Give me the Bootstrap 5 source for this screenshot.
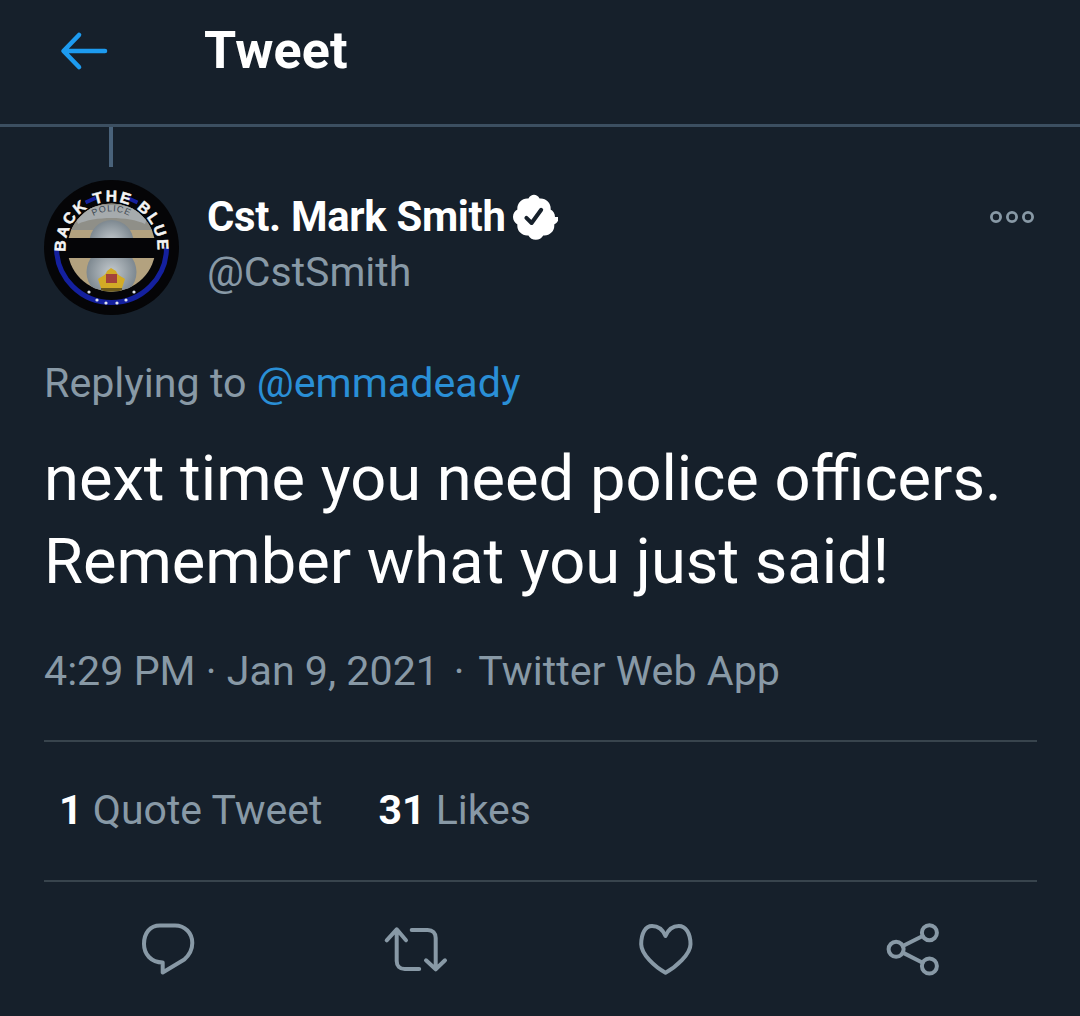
<!DOCTYPE html>
<html lang="en"><head><meta charset="utf-8"><title>Tweet</title>
<link href="https://cdn.jsdelivr.net/npm/bootstrap@5.3.0/dist/css/bootstrap.min.css" rel="stylesheet">
<style>
html,body{background:#16202b;height:1016px;overflow:hidden}
body{font-family:Roboto,"Liberation Sans",sans-serif;color:#fff;-webkit-font-smoothing:antialiased}
.tw-head{height:127px;border-bottom:3px solid #3c4f61;padding:0 0 22px 60px}
.tw-back{width:48px;height:40px;margin-right:96px}
.tw-title{font-size:52px;font-weight:700;line-height:1;letter-spacing:.2px}
.tw-thread{width:4px;height:40px;background:#49627a;margin-left:109px}
.tw-body{padding:0 43px 0 44px}
.tw-user{margin-top:13px;height:135px}
.tw-avatar{width:135px;height:135px;margin-right:28px;flex:none}
.tw-names{padding-top:12px}
.tw-name{font-size:41.800px;font-weight:700;line-height:50px;letter-spacing:-.3px}
.tw-handle{font-size:41px;line-height:60px;color:#8899a6}
.tw-badge{width:48px;height:48px;margin-left:4px}
.tw-more{width:46px;height:14px;margin:30px 2px 0 0}
.tw-reply{font-size:41.200px;line-height:50px;color:#8899a6;margin-top:43px}
.tw-reply span{color:#2a8fd6}
.tw-text{font-size:63.200px;line-height:83px;margin-top:29px}
.tw-meta{font-size:41.200px;line-height:50px;color:#8899a6;margin-top:43px;padding-bottom:44px;border-bottom:2px solid #38444d}
.tw-dot-b{margin:0 4.500px}
.tw-stats{font-size:41px;line-height:50px;color:#8899a6;padding:43px 0 45px 15px;border-bottom:2px solid #38444d;gap:56px}
.tw-stats b{color:#fff;font-weight:700}
.tw-actions{padding-top:39px}
.tw-action{width:25%}
.tw-action svg{display:block;height:56px;fill:none;stroke:#8899a6;stroke-width:4;stroke-linecap:round;stroke-linejoin:round}
.tw-ic-56{width:56px}
.tw-ic-66{width:66px}
</style></head>
<body>
<header class="tw-head d-flex align-items-center">
<svg class="tw-back" viewBox="0 0 48 40" fill="none" stroke="#1d9bf0" stroke-width="4.600" stroke-linecap="round" stroke-linejoin="round"><path d="M45 20H5M19 4 3.500 20 19 36"/></svg>
<div class="tw-title">Tweet</div>
</header>
<div class="tw-thread"></div>
<main class="tw-body">
<div class="tw-user d-flex">
<svg class="tw-avatar" viewBox="0 0 135 135">
<defs>
<clipPath id="ac"><circle cx="67.500" cy="67.500" r="44"/></clipPath>
<path id="arc" d="M23.070 79.400A46 46 0 1 1 111.930 79.400"/>
<path id="arc2" d="M33 55a37 37 0 0 1 69 0"/>
<radialGradient id="sil"><stop offset="0" stop-color="#c3c9cd"/><stop offset="1" stop-color="#7d8890"/></radialGradient>
</defs>
<circle cx="67.500" cy="67.500" r="67.500" fill="#050507"/>
<path d="M12.500 67.500a55 55 0 0 0 110 0" fill="none" stroke="#14209e" stroke-width="5"/>
<path d="M41.500 22.500 51.500 18M83.500 18l10 4.500" fill="none" stroke="#14209e" stroke-width="4"/>
<g clip-path="url(#ac)">
<rect x="20" y="20" width="95" height="100" fill="#b3a27f"/>
<path d="M20 20h95v30H20z" fill="#8f8f88"/>
<circle cx="67.500" cy="62" r="22" fill="url(#sil)"/>
<circle cx="67.500" cy="92" r="25" fill="url(#sil)"/>
<path d="M30 34c20-12 55-12 75 0l-4 10c-16-8-51-8-67 0z" fill="#a6abad"/>
<path d="M54 99c4-3 7-3 9-8l4-3 5 3c2 5 5 5 9 8l-3 9c-7 5-17 5-21 0z" fill="#d2ab26"/>
<path d="M62 94h11v9H62z" fill="#a3423a"/>
<path d="M57 108h21v4H57z" fill="#6b5a1e"/>
</g>
<rect x="20" y="58" width="95" height="20" fill="#050507"/>
<text font-size="9" fill="#3d4852" text-anchor="middle" font-family="Liberation Sans,sans-serif" letter-spacing=".8"><textPath href="#arc2" startOffset="50%">POLICE</textPath></text>
<text font-size="15.500" font-weight="700" fill="#f5f5f5" stroke="#f5f5f5" stroke-width=".5" font-family="Liberation Sans,sans-serif" text-anchor="middle" letter-spacing="2"><textPath href="#arc" startOffset="50%">BACK THE BLUE</textPath></text>
<g fill="#dfe3ee"><circle cx="45" cy="112" r="1.600"/><circle cx="53" cy="120" r="1.600"/><circle cx="62" cy="123" r="1.600"/><circle cx="73" cy="123" r="1.600"/><circle cx="82" cy="120" r="1.600"/><circle cx="90" cy="112" r="1.600"/></g>
</svg>
<div class="tw-names flex-grow-1">
<div class="tw-name d-flex align-items-center">Cst. Mark Smith
<svg class="tw-badge" viewBox="0 0 24 24"><path fill="#fff" d="M22.500 12c0-1.600-.9-3-2.200-3.700.2-1.500-.3-3-1.400-4.100-1.100-1.100-2.600-1.600-4.100-1.400C14.100 1.500 13.100.9 12 .9S9.900 1.500 9.200 2.800C7.700 2.600 6.200 3.100 5.100 4.200 4 5.300 3.500 6.800 3.700 8.300 2.400 9 1.500 10.400 1.500 12s.9 3 2.200 3.700c-.2 1.500.3 3 1.400 4.100 1.100 1.100 2.600 1.600 4.100 1.400.7 1.300 2.100 2.200 3.700 2.200s3-.9 3.700-2.200c1.500.2 3-.3 4.100-1.400 1.100-1.100 1.600-2.600 1.400-4.100 1.300-.7 2.400-2.100 2.400-3.700z"/><path fill="none" stroke="#16202b" stroke-width="2" stroke-linecap="round" stroke-linejoin="round" d="M8.200 12.400l2.600 2.600 4.800-6.600"/></svg>
</div>
<div class="tw-handle">@CstSmith</div>
</div>
<svg class="tw-more" viewBox="0 0 46 14" fill="none" stroke="#8899a6" stroke-width="2.800"><circle cx="7" cy="7" r="4.600"/><circle cx="23" cy="7" r="4.600"/><circle cx="39" cy="7" r="4.600"/></svg>
</div>
<div class="tw-reply">Replying to <span>@emmadeady</span></div>
<div class="tw-text">next time you need police officers.<br>Remember what you just said!</div>
<div class="tw-meta">4:29 PM · Jan 9, 2021 <span class="tw-dot-b">·</span> Twitter Web App</div>
<div class="tw-stats d-flex"><div><b>1</b> Quote Tweet</div><div><b>31</b> Likes</div></div>
<div class="tw-actions d-flex">
<div class="tw-action d-flex justify-content-center"><svg class="tw-ic-56" viewBox="0 0 56 56"><path d="M20 4.500h15C45 4.500 52.300 12 52.300 22c0 7-3 12-8 16.500L22.700 51.500V41.500C11 41.500 4 33 4 23 4 12 10 4.500 20 4.500z"/></svg></div>
<div class="tw-action d-flex justify-content-center"><svg class="tw-ic-66" viewBox="0 0 66 56"><path d="M3.700 19.300 13.700 8.300 23 19.300M13.700 9v31c0 5 3 8 8 8h14.500M28.700 9h16c5 0 8 3 8 8v31M43 39.300l9.700 9 9.300-9"/></svg></div>
<div class="tw-action d-flex justify-content-center"><svg class="tw-ic-56" viewBox="0 0 56 56"><path d="M28.500 15C26 9 21 5 15 5 8.500 5 4.200 12 4.200 23.300c0 10 14 23 24.300 28.400 10.300-5.400 25-18.400 25-28.400C53.500 12 48.500 5 41.800 5c-6 0-10.800 4-13.300 10z"/></svg></div>
<div class="tw-action d-flex justify-content-center"><svg class="tw-ic-56" viewBox="0 0 56 56"><circle cx="44.400" cy="11.700" r="7.500"/><circle cx="44.400" cy="45" r="7.500"/><circle cx="11.100" cy="28.300" r="7.500"/><path d="M17.800 25 37.700 15M17.800 31.600 37.700 41.700"/></svg></div>
</div>
</main>
</body></html>
